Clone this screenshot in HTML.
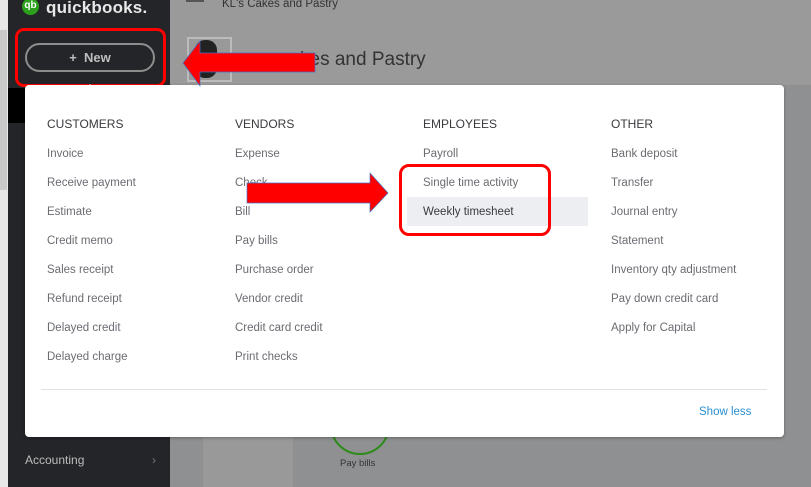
<!DOCTYPE html>
<html><head><meta charset="utf-8"><style>
*{margin:0;padding:0;box-sizing:border-box}
body{width:811px;height:487px;overflow:hidden;position:relative;font-family:"Liberation Sans",sans-serif;background:#8f9092}
.a{position:absolute}
.col{position:absolute;top:117px;font-size:11.5px;color:#6b6c72}
.col div{height:29px;line-height:14px}
.col .h{color:#393a3d;font-size:12px;height:30px}
</style></head><body>
<div class="a" style="left:0;top:0;width:8px;height:487px;background:#e8e8e8"></div>
<div class="a" style="left:0;top:30px;width:7px;height:160px;background:#c9c9c9"></div>
<div class="a" style="left:8px;top:0;width:162px;height:487px;background:#232528"></div>
<div class="a" style="left:8px;top:88px;width:20px;height:35px;background:#000"></div>
<div class="a" style="left:22px;top:-2px;width:17px;height:17px;border-radius:50%;background:#2ca01c;color:#fff;font-size:10px;font-weight:bold;text-align:center;line-height:15px">qb</div>
<div class="a" style="left:46px;top:-2px;color:#e8e8e8;font-size:17px;font-weight:bold;letter-spacing:0.2px">quickbooks.</div>
<div class="a" style="left:25px;top:43px;width:130px;height:29px;border:2px solid #8d8d8d;border-radius:15px;color:#bfbfbf;font-size:13px;font-weight:bold;text-align:center;line-height:25px">+&nbsp;&nbsp;New</div>
<div class="a" style="left:15px;top:28px;width:151px;height:59px;border:3px solid #f00;border-radius:9px"></div>
<div class="a" style="left:84px;top:78px;width:0;height:0;border:6px solid transparent;border-bottom-color:#fff"></div>
<div class="a" style="left:25px;top:453px;color:#bdbdbd;font-size:12px">Accounting</div>
<div class="a" style="left:152px;top:453px;color:#777;font-size:12px">›</div>
<div class="a" style="left:170px;top:0;width:641px;height:85px;background:#9a9a9b"></div>
<div class="a" style="left:186px;top:0;width:18px;height:2px;background:#555;box-shadow:0 -5px 0 #555"></div>
<div class="a" style="left:222px;top:-2px;color:#333;font-size:11.5px">KL's Cakes and Pastry</div>
<div class="a" style="left:187px;top:37px;width:45px;height:45px;border:2px solid #bbb;background:#999"></div>
<div class="a" style="left:195px;top:40px;width:22px;height:38px;border-radius:10px;background:#222"></div>
<div class="a" style="left:300px;top:49px;color:#333;font-size:19px">kes and Pastry</div>
<div class="a" style="left:203px;top:420px;width:90px;height:67px;background:#999"></div>
<div class="a" style="left:330px;top:395px;width:60px;height:60px;border:2px solid #2e8b1a;border-radius:50%"></div>
<div class="a" style="left:340px;top:458px;color:#333;font-size:9.5px">Pay bills</div>
<div class="a" style="left:25px;top:85px;width:759px;height:352px;background:#fff;border-radius:4px;box-shadow:0 1px 3px rgba(0,0,0,.3)"></div>
<div class="a" style="left:407px;top:197px;width:181px;height:29px;background:#eceef1"></div>
<div class="col" style="left:47px"><div class="h">CUSTOMERS</div><div>Invoice</div><div>Receive payment</div><div>Estimate</div><div>Credit memo</div><div>Sales receipt</div><div>Refund receipt</div><div>Delayed credit</div><div>Delayed charge</div></div>
<div class="col" style="left:235px"><div class="h">VENDORS</div><div>Expense</div><div>Check</div><div>Bill</div><div>Pay bills</div><div>Purchase order</div><div>Vendor credit</div><div>Credit card credit</div><div>Print checks</div></div>
<div class="col" style="left:423px"><div class="h">EMPLOYEES</div><div>Payroll</div><div>Single time activity</div><div style="color:#393a3d">Weekly timesheet</div></div>
<div class="col" style="left:611px"><div class="h">OTHER</div><div>Bank deposit</div><div>Transfer</div><div>Journal entry</div><div>Statement</div><div>Inventory qty adjustment</div><div>Pay down credit card</div><div>Apply for Capital</div></div>
<div class="a" style="left:41px;top:389px;width:726px;height:1px;background:#e0e0e0"></div>
<div class="a" style="left:699px;top:406px;color:#2a8fd0;font-size:11.5px">Show less</div>
<div class="a" style="left:399px;top:164px;width:152px;height:72px;border:3px solid #f00;border-radius:10px"></div>
<svg class="a" style="left:0;top:0" width="811" height="487">
<polygon points="315,53 200,53 200,41 183,63 200,86 200,72 315,72" fill="#f00" stroke="#4472c4" stroke-width="0.7"/>
<polygon points="247,183 370,183 370,173 388,193 370,212 370,203 247,203" fill="#f00" stroke="#4472c4" stroke-width="0.7"/>
</svg>
</body></html>
